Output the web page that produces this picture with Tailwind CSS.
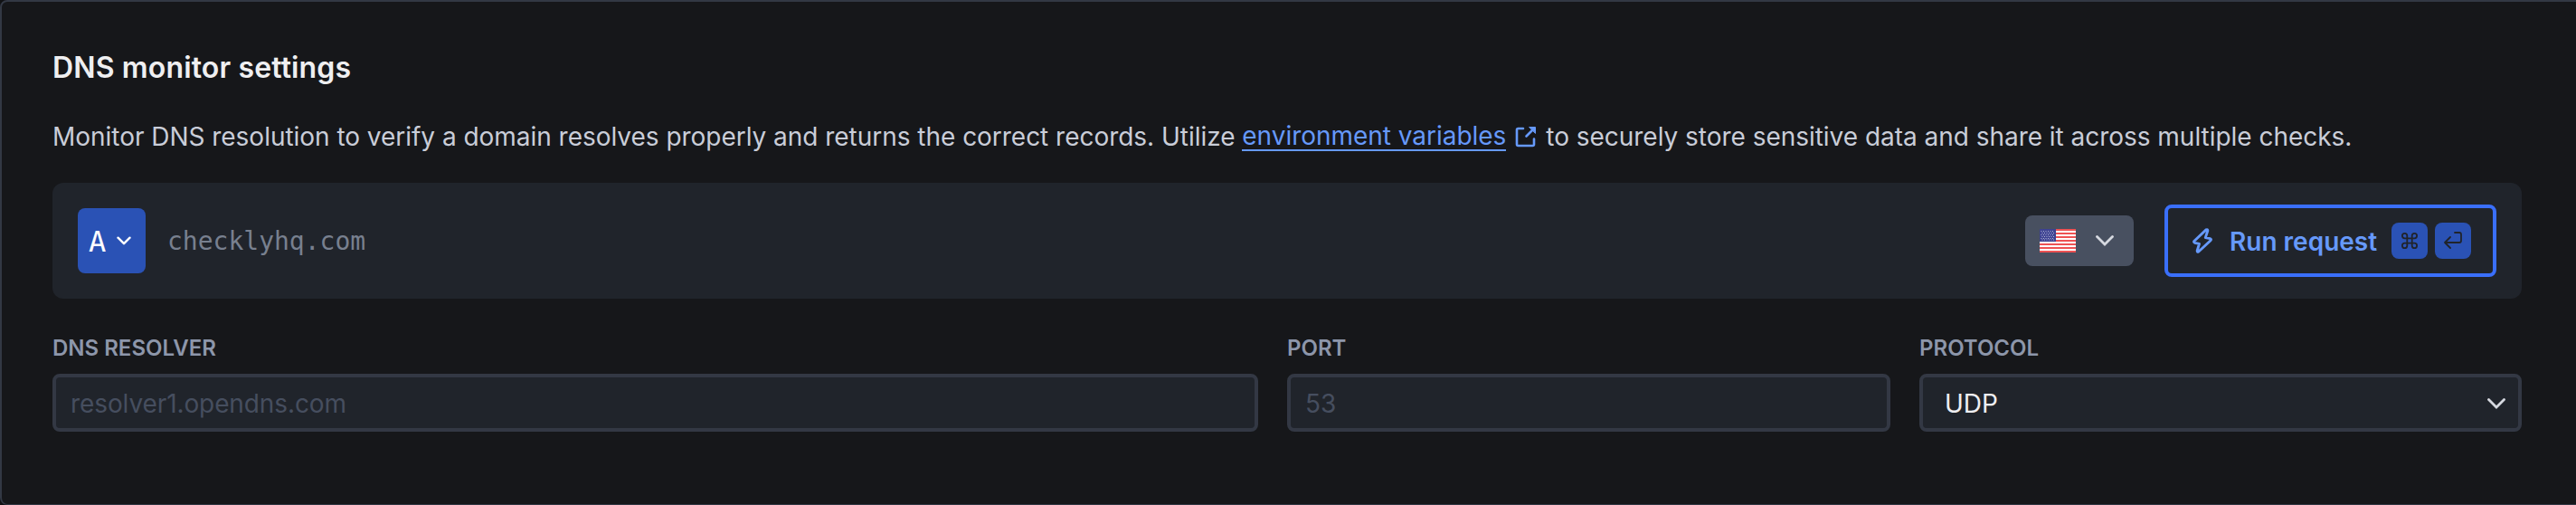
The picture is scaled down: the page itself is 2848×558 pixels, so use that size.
<!DOCTYPE html>
<html lang="en">
<head>
<meta charset="utf-8">
<title>DNS monitor settings</title>
<script src="https://cdn.jsdelivr.net/npm/@tailwindcss/browser@4"></script>
</head>
<body class="h-[558px] overflow-hidden bg-[#111214] font-['Inter',sans-serif] text-[28px]">
<main class="flex h-[558px] w-[2860px] flex-col rounded-[8px] border-2 border-b border-[#323844] bg-[#16171a] px-[56px] pt-[51px]">
  <h1 class="h-[44px] text-[32px] leading-[44px] font-semibold tracking-[0.14px] whitespace-nowrap text-[#efeff1]">DNS monitor settings</h1>
  <p class="mt-[32px] flex h-[44px] items-center leading-[44px] tracking-[-0.030px] whitespace-pre text-[#c9cdd8]"><span>Monitor DNS resolution to verify a domain resolves properly and returns the correct records. Utilize </span><a class="flex h-[32px] items-center border-b-2 border-[#6699fa] text-[#6699fa]">environment variables</a><svg class="mr-[10px] ml-[10px] size-[24px] text-[#6699fa]" viewBox="0 0 24 24" fill="none" stroke="currentColor" stroke-width="2.6" stroke-linecap="round" stroke-linejoin="round"><path d="M9 3H3.500Q2 3 2 4.500V20.500Q2 22 3.500 22H19.500Q21 22 21 20.500V14.500M12.500 11.500L20 4"/><path d="M16 1.500H22.500V8Z" fill="currentColor" stroke-width="1"/></svg><span>to securely store sensitive data and share it across multiple checks.</span></p>
  <section class="mt-[29px] flex h-[128px] w-[2730px] shrink-0 items-center rounded-[12px] bg-[#20242b] px-[28px]">
    <button class="flex h-[72px] w-[75px] items-center rounded-[8px] bg-[#2a52b5] pl-[12px] text-white"><span class="pt-px font-['DejaVu_Sans_Mono',monospace] text-[32px]">A</span><svg class="ml-[12px] h-[10px] w-[16px]" viewBox="0 0 16 10" fill="none" stroke="currentColor" stroke-width="2.400" stroke-linecap="round" stroke-linejoin="round"><path d="M1.500 1.700L8 8.200L14.500 1.700"/></svg></button>
    <span class="ml-[24px] flex-1 pt-[2px] font-['DejaVu_Sans_Mono',monospace] text-[#78808f]">checklyhq.com</span>
    <button class="flex h-[56px] w-[120px] items-center rounded-[8px] bg-[#485060] pl-[16px]">
      <svg class="h-[26px] w-[40px]" viewBox="0 0 40 26"><path fill="#fff" d="M0 0h40v26H0z"/><path stroke="#ee5253" stroke-width="2" d="M0 1h40M0 5h40M0 9h40M0 13h40M0 17h40M0 21h40M0 25h40"/><path fill="#3d4291" d="M0 0h18v14H0z"/><path stroke="#b4b7d8" stroke-width="1" stroke-dasharray="1 1.500" d="M1.500 2.500h15M2.500 4.500h14M1.500 6.500h15M2.500 8.500h14M1.500 10.500h15M2.500 12h14"/></svg>
      <svg class="ml-[22px] h-[12px] w-[20px]" viewBox="0 0 20 12" fill="none" stroke="#d6d9e0" stroke-width="2.800" stroke-linecap="round"><path d="M1.500 1.500L10 10L18.500 1.500"/></svg>
    </button>
    <button class="ml-[34px] flex h-[80px] w-[367px] items-center rounded-[8px] border-4 border-[#3a6ffb] pl-[27px] text-[#6699fa]">
      <svg class="h-[28px] w-[22px] shrink-0" viewBox="0 0 22 28" fill="none" stroke="currentColor" stroke-width="2.900" stroke-linejoin="round"><path d="M15 1.900L2 14.200Q.8 15.700 2.600 16.300L7.500 17.300L5.200 25Q5 27 6.800 26L20 13.700Q21.200 12.200 19.400 11.600L14.300 10.600L16.800 3Q17 .900 15 1.900Z"/></svg>
      <span class="ml-[19px] w-[162px] pt-px text-left font-semibold whitespace-nowrap">Run request</span>
      <span class="ml-[17px] flex size-[40px] shrink-0 items-center justify-center rounded-[8px] bg-[#2a52b5]"><svg class="size-[18px]" viewBox="0 0 20 20" fill="none" stroke="#20242b" stroke-width="2"><path d="M7 7V4a3 3 0 1 0-3 3h12a3 3 0 1 0-3-3v12a3 3 0 1 0 3-3H4a3 3 0 1 0 3 3Z"/></svg></span>
      <span class="ml-[8px] flex size-[40px] shrink-0 items-center justify-center rounded-[8px] bg-[#2a52b5]"><svg class="size-[20px]" viewBox="0 0 20 20" fill="none" stroke="#20242b" stroke-width="1.800" stroke-linecap="round" stroke-linejoin="round"><path d="M7 6L1 12L7 18M1 12H17Q19 12 19 10V3Q19 1 17 1H12"/></svg></span>
    </button>
  </section>
  <section class="mt-[38px] flex w-[2730px] gap-[32px]">
    <div class="w-[1333px]"><label class="block h-[34px] text-[24px] leading-[34px] font-semibold text-[#8d96aa]">DNS RESOLVER</label><div class="mt-[11px] flex h-[64px] items-center rounded-[8px] border-4 border-[#333844] bg-[#20242b] px-[16px] pt-px tracking-[-0.1px] text-[#464e5f]">resolver1.opendns.com</div></div>
    <div class="w-[667px]"><label class="block h-[34px] text-[24px] leading-[34px] font-semibold text-[#8d96aa]">PORT</label><div class="mt-[11px] flex h-[64px] items-center rounded-[8px] border-4 border-[#333844] bg-[#20242b] px-[16px] pt-px text-[#464e5f]">53</div></div>
    <div class="w-[666px]"><label class="block h-[34px] text-[24px] leading-[34px] font-semibold text-[#8d96aa]">PROTOCOL</label><div class="mt-[11px] flex h-[64px] items-center justify-between rounded-[8px] border-4 border-[#333844] bg-[#20242b] pt-px pr-[14px] pl-[24px] text-[#efeff1]">UDP<svg class="h-[12px] w-[20px]" viewBox="0 0 20 12" fill="none" stroke="#d6d9e0" stroke-width="2.800" stroke-linecap="round"><path d="M1.500 1.500L10 10L18.500 1.500"/></svg></div></div>
  </section>
</main>
</body>
</html>
